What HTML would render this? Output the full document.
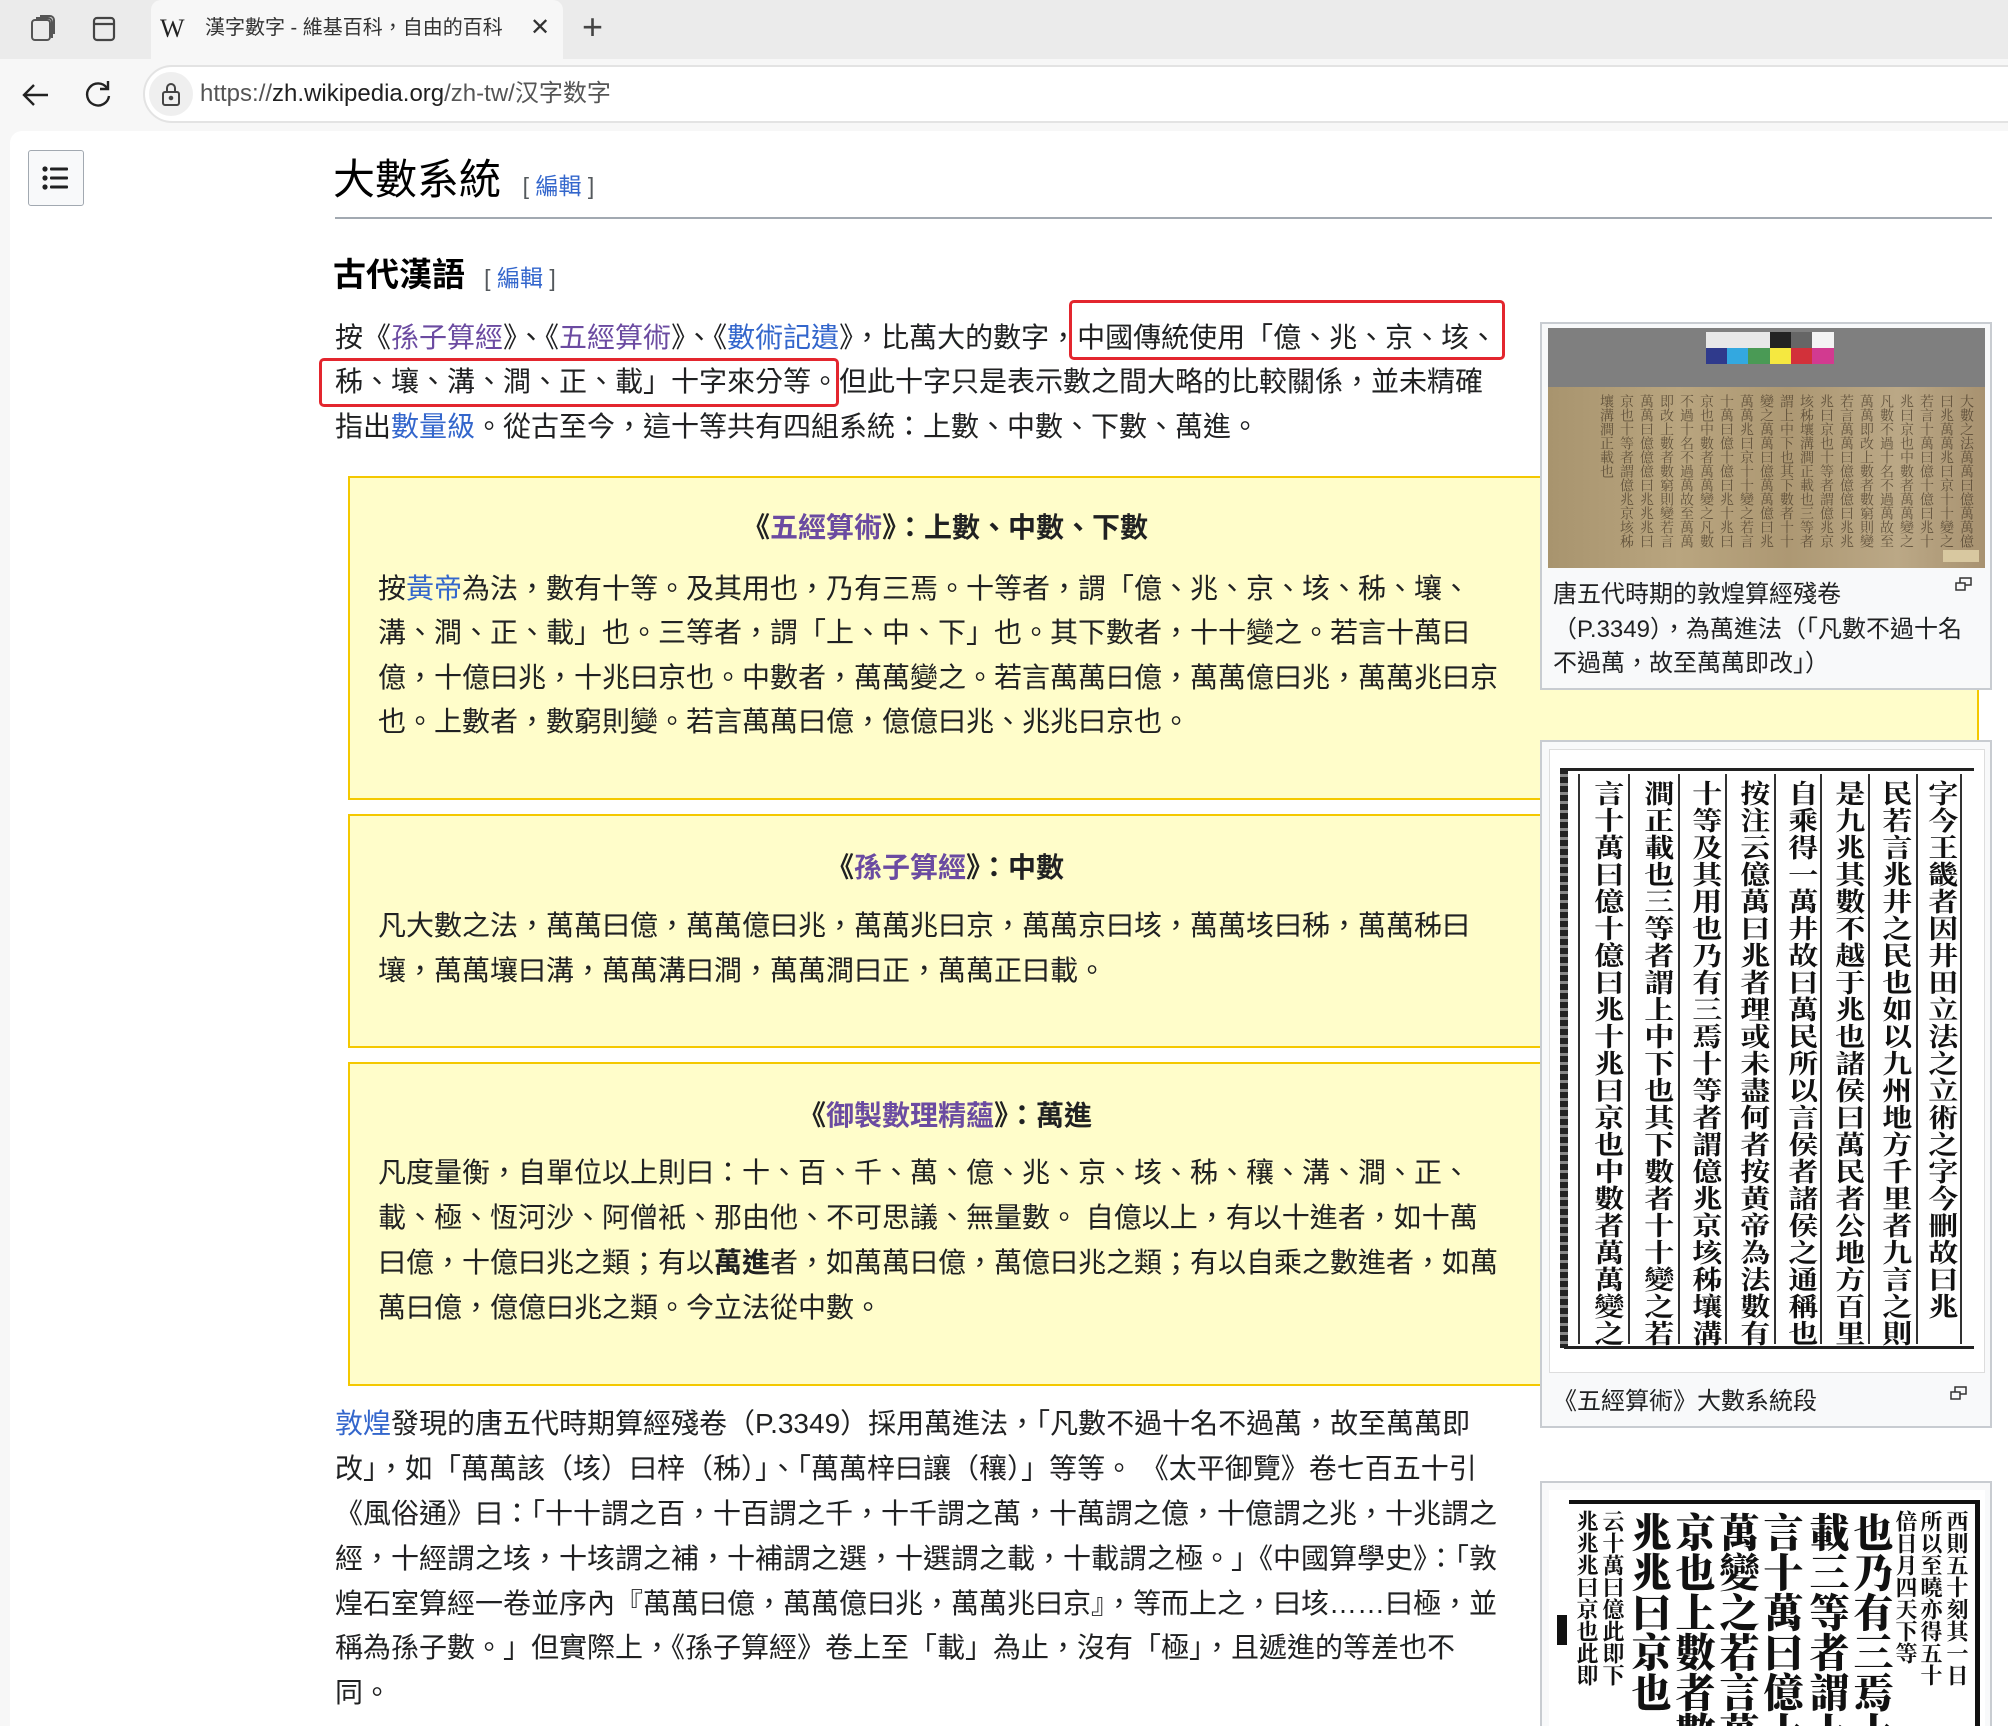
<!DOCTYPE html>
<html><head><meta charset="utf-8">
<style>
*{margin:0;padding:0;box-sizing:border-box}
html,body{width:2008px;height:1726px;overflow:hidden}
body{background:#f7f7f7;font-family:"Liberation Sans","Noto Sans CJK TC",sans-serif;color:#202122;position:relative}
.a{position:absolute;white-space:nowrap}
.t{font-size:28px;line-height:45px;left:335px}
.b{font-size:28px;line-height:45px;left:378px}
.bt{font-size:28px;line-height:45px;font-weight:bold;left:348px;width:1194px;text-align:center}
.blue{color:#3366cc}
.vis{color:#6b4ba1}
.box{position:absolute;left:348px;width:1631px;background:#fffdca;border:2px solid #f4c800}
.fig{position:absolute;left:1540px;width:452px;background:#f8f9fa;border:2px solid #c8ccd1}
.cap{font-size:24px;line-height:34px;color:#202122}
.red{position:absolute;border:3px solid #e3262e;border-radius:5px}
.col{position:absolute;writing-mode:vertical-rl;font-family:"Noto Serif CJK SC","Liberation Serif",serif;font-weight:700;color:#111;white-space:nowrap}
.edit{font-size:23px;color:#54595d}
.edit b{color:#3366cc;font-weight:normal}
</style></head><body>

<!-- tab bar -->
<div class="a" style="left:0;top:0;width:2008px;height:59px;background:#ebebeb"></div>
<div class="a" style="left:151px;top:0;width:412px;height:59px;background:#f7f7f7;border-radius:10px 10px 0 0"></div>
<svg class="a" style="left:26px;top:12px" width="34" height="34" viewBox="0 0 34 34" fill="none" stroke="#555" stroke-width="2"><rect x="6" y="8" width="18" height="20" rx="3"/><path d="M10 6h12a4 4 0 0 1 4 4v16"/><path d="M14 4h10a4 4 0 0 1 4 4v14"/></svg>
<svg class="a" style="left:90px;top:14px" width="30" height="30" viewBox="0 0 30 30" fill="none" stroke="#444" stroke-width="2.2"><rect x="4" y="4" width="20" height="22" rx="3"/><path d="M4 10h20"/></svg>
<div class="a" style="left:160px;top:15px;font-family:'Liberation Serif',serif;font-size:26px;line-height:28px;color:#222">W</div>
<div class="a" style="left:205px;top:14px;font-size:20px;line-height:28px;color:#333;width:310px;overflow:hidden">漢字數字 - 維基百科，自由的百科</div>
<div class="a" style="left:530px;top:13px;font-size:24px;color:#333">✕</div>
<div class="a" style="left:582px;top:6px;font-size:36px;color:#444;font-weight:300">+</div>

<!-- address row -->
<div class="a" style="left:0;top:59px;width:2008px;height:72px;background:#f7f7f7"></div>
<svg class="a" style="left:20px;top:80px" width="32" height="30" viewBox="0 0 32 30" fill="none" stroke="#222" stroke-width="2.4"><path d="M28 15H5M14 5L4 15l10 10"/></svg>
<svg class="a" style="left:82px;top:78px" width="32" height="32" viewBox="0 0 32 32" fill="none" stroke="#222" stroke-width="2.4"><path d="M25 10a11 11 0 1 0 2 8"/><path d="M26 3v8h-8"/></svg>
<div class="a" style="left:143px;top:65px;width:1900px;height:58px;background:#fff;border:2px solid #e3e3e3;border-radius:29px"></div>
<div class="a" style="left:149px;top:72px;width:44px;height:44px;background:#efefef;border-radius:22px"></div>
<svg class="a" style="left:159px;top:80px" width="24" height="28" viewBox="0 0 24 28" fill="none" stroke="#444" stroke-width="2"><rect x="4" y="12" width="16" height="13" rx="2"/><path d="M8 12V8a4 4 0 0 1 8 0v4"/><circle cx="12" cy="18" r="1.3" fill="#444"/></svg>
<div class="a" style="left:200px;top:78px;font-size:24px;line-height:32px;color:#555">https://<span style="color:#1f1f1f">zh.wikipedia.org</span>/zh-tw/汉字数字</div>

<!-- page -->
<div class="a" style="left:10px;top:131px;width:1998px;height:1595px;background:#fff;border-radius:12px 0 0 0"></div>
<div class="a" style="left:28px;top:150px;width:56px;height:56px;background:#f8f9fa;border:1px solid #a2a9b1;border-radius:3px"></div>
<svg class="a" style="left:40px;top:162px" width="32" height="32" viewBox="0 0 32 32" fill="#202122"><circle cx="5" cy="7" r="2.6"/><circle cx="5" cy="16" r="2.6"/><circle cx="5" cy="25" r="2.6"/><rect x="10" y="5.5" width="18" height="3" rx="1"/><rect x="10" y="14.5" width="18" height="3" rx="1"/><rect x="10" y="23.5" width="18" height="3" rx="1"/></svg>

<div class="a" style="left:333px;top:152px;font-size:42px;line-height:56px;color:#000">大數系統 <span class="edit" style="margin-left:10px">[ <b>編輯</b> ]</span></div>
<div class="a" style="left:335px;top:217px;width:1657px;height:2px;background:#a2a9b1"></div>
<div class="a" style="left:333px;top:252px;font-size:33px;line-height:46px;font-weight:bold;color:#000">古代漢語 <span class="edit" style="font-weight:normal;margin-left:10px">[ <b>編輯</b> ]</span></div>

<div class="a t" style="top:315px">按《<span class="vis">孫子算經</span>》、《<span class="vis">五經算術</span>》、《<span class="blue">數術記遺</span>》，比萬大的數字，中國傳統使用「億、兆、京、垓、</div>
<div class="a t" style="top:359px">秭、壤、溝、澗、正、載」十字來分等。但此十字只是表示數之間大略的比較關係，並未精確</div>
<div class="a t" style="top:404px">指出<span class="blue">數量級</span>。從古至今，這十等共有四組系統：上數、中數、下數、萬進。</div>
<div class="red" style="left:1069px;top:300px;width:436px;height:60px"></div>
<div class="red" style="left:319px;top:358px;width:520px;height:49px"></div>

<!-- boxes -->
<div class="box" style="top:476px;height:324px"></div>
<div class="a bt" style="top:505px">《<span class="vis">五經算術</span>》：上數、中數、下數</div>
<div class="a b" style="top:566px">按<span class="blue">黃帝</span>為法，數有十等。及其用也，乃有三焉。十等者，謂「億、兆、京、垓、秭、壤、</div>
<div class="a b" style="top:610px">溝、澗、正、載」也。三等者，謂「上、中、下」也。其下數者，十十變之。若言十萬曰</div>
<div class="a b" style="top:655px">億，十億曰兆，十兆曰京也。中數者，萬萬變之。若言萬萬曰億，萬萬億曰兆，萬萬兆曰京</div>
<div class="a b" style="top:699px">也。上數者，數窮則變。若言萬萬曰億，億億曰兆、兆兆曰京也。</div>

<div class="box" style="top:814px;height:234px"></div>
<div class="a bt" style="top:845px">《<span class="vis">孫子算經</span>》：中數</div>
<div class="a b" style="top:903px">凡大數之法，萬萬曰億，萬萬億曰兆，萬萬兆曰京，萬萬京曰垓，萬萬垓曰秭，萬萬秭曰</div>
<div class="a b" style="top:948px">壤，萬萬壤曰溝，萬萬溝曰澗，萬萬澗曰正，萬萬正曰載。</div>

<div class="box" style="top:1062px;height:324px"></div>
<div class="a bt" style="top:1093px">《<span class="vis">御製數理精蘊</span>》：萬進</div>
<div class="a b" style="top:1150px">凡度量衡，自單位以上則曰：十、百、千、萬、億、兆、京、垓、秭、穰、溝、澗、正、</div>
<div class="a b" style="top:1195px">載、極、恆河沙、阿僧衹、那由他、不可思議、無量數。 自億以上，有以十進者，如十萬</div>
<div class="a b" style="top:1240px">曰億，十億曰兆之類；有以<b>萬進</b>者，如萬萬曰億，萬億曰兆之類；有以自乘之數進者，如萬</div>
<div class="a b" style="top:1285px">萬曰億，億億曰兆之類。今立法從中數。</div>

<div class="a t" style="top:1401px"><span class="blue">敦煌</span>發現的唐五代時期算經殘卷（P.3349）採用萬進法，「凡數不過十名不過萬，故至萬萬即</div>
<div class="a t" style="top:1446px">改」，如「萬萬該（垓）曰梓（秭）」、「萬萬梓曰讓（穰）」等等。 《太平御覽》卷七百五十引</div>
<div class="a t" style="top:1491px">《風俗通》曰：「十十謂之百，十百謂之千，十千謂之萬，十萬謂之億，十億謂之兆，十兆謂之</div>
<div class="a t" style="top:1536px">經，十經謂之垓，十垓謂之補，十補謂之選，十選謂之載，十載謂之極。」《中國算學史》：「敦</div>
<div class="a t" style="top:1581px">煌石室算經一卷並序內『萬萬曰億，萬萬億曰兆，萬萬兆曰京』，等而上之，曰垓……曰極，並</div>
<div class="a t" style="top:1625px">稱為孫子數。」但實際上，《孫子算經》卷上至「載」為止，沒有「極」，且遞進的等差也不</div>
<div class="a t" style="top:1670px">同。</div>

<!-- figure 1 -->
<div class="fig" style="top:322px;height:368px"></div>
<div class="a" style="left:1548px;top:328px;width:437px;height:240px;background:#7f7f7f;overflow:hidden">
  <div class="a" style="left:0;top:59px;width:437px;height:181px;background:linear-gradient(90deg,#a8946e,#b9a57f 30%,#ad9873 55%,#bba886 80%,#a89270);"></div>
  <div class="col" style="right:8px;top:66px;font-size:14px;line-height:20px;color:#3f3222;font-weight:400;height:165px;white-space:normal;opacity:.7">大數之法萬萬曰億萬萬億曰兆萬萬兆曰京十十變之若言十萬曰億十億曰兆十兆曰京也中數者萬萬變之凡數不過十名不過萬故至萬萬即改上數者數窮則變若言萬萬曰億億億曰兆兆兆曰京也十等者謂億兆京垓秭壤溝澗正載也三等者謂上中下也其下數者十十變之萬萬曰億萬萬億曰兆萬萬兆曰京十十變之若言十萬曰億十億曰兆十兆曰京也中數者萬萬變之凡數不過十名不過萬故至萬萬即改上數者數窮則變若言萬萬曰億億億曰兆兆兆曰京也十等者謂億兆京垓秭壤溝澗正載也</div>
  <div class="a" style="left:158px;top:4px;width:64px;height:16px;background:#e8e8e8"></div>
  <div class="a" style="left:222px;top:4px;width:21px;height:16px;background:#222"></div>
  <div class="a" style="left:243px;top:4px;width:21px;height:16px;background:#666"></div>
  <div class="a" style="left:264px;top:4px;width:22px;height:16px;background:#f4f4f4"></div>
  <div class="a" style="left:158px;top:20px;width:21px;height:16px;background:#2f3a8c"></div>
  <div class="a" style="left:179px;top:20px;width:21px;height:16px;background:#33a8e0"></div>
  <div class="a" style="left:200px;top:20px;width:22px;height:16px;background:#4a9a55"></div>
  <div class="a" style="left:222px;top:20px;width:21px;height:16px;background:#f5e840"></div>
  <div class="a" style="left:243px;top:20px;width:21px;height:16px;background:#d2313a"></div>
  <div class="a" style="left:264px;top:20px;width:22px;height:16px;background:#d23a90"></div>
  <div class="a" style="left:395px;top:222px;width:36px;height:12px;background:#d8c8a0"></div>
</div>
<svg class="a" style="left:1955px;top:576px" width="18" height="16" viewBox="0 0 18 16" fill="none" stroke="#333" stroke-width="1.5"><rect x="1" y="7" width="9" height="7"/><path d="M5 7V2h11v7h-6"/></svg>
<div class="a cap" style="left:1553px;top:578px">唐五代時期的敦煌算經殘卷</div>
<div class="a cap" style="left:1553px;top:613px">（P.3349），為萬進法（「凡數不過十名</div>
<div class="a cap" style="left:1553px;top:647px">不過萬，故至萬萬即改」）</div>

<!-- figure 2 -->
<div class="fig" style="top:740px;height:688px"></div>
<div class="a" style="left:1549px;top:749px;width:436px;height:624px;background:#fff;border:1px solid #ddd;overflow:hidden">
  <div class="a" style="left:14px;top:18px;width:410px;height:3px;background:#222"></div>
  <div class="a" style="left:14px;top:596px;width:410px;height:3px;background:#222"></div>
  <div class="a" style="left:10px;top:18px;width:8px;height:580px;background:repeating-linear-gradient(180deg,#222 0 6px,#888 6px 9px)"></div>
  <div class="a" style="left:28px;top:24px;width:2px;height:570px;background:#333"></div>
  <div class="a" style="left:78px;top:24px;width:2px;height:570px;background:#333"></div>
  <div class="a" style="left:128px;top:24px;width:2px;height:570px;background:#333"></div>
  <div class="a" style="left:175px;top:24px;width:2px;height:570px;background:#333"></div>
  <div class="a" style="left:224px;top:24px;width:2px;height:570px;background:#333"></div>
  <div class="a" style="left:270px;top:24px;width:2px;height:570px;background:#333"></div>
  <div class="a" style="left:318px;top:24px;width:2px;height:570px;background:#333"></div>
  <div class="a" style="left:366px;top:24px;width:2px;height:570px;background:#333"></div>
  <div class="a" style="left:410px;top:24px;width:2px;height:570px;background:#333"></div>
  <div class="col" style="left:38px;top:30px;font-size:26px;line-height:36px;letter-spacing:1px;transform:scaleX(1.15);transform-origin:left top">言十萬曰億十億曰兆十兆曰京也中數者萬萬變之</div>
  <div class="col" style="left:88px;top:30px;font-size:26px;line-height:36px;letter-spacing:1px;transform:scaleX(1.15);transform-origin:left top">澗正載也三等者謂上中下也其下數者十十變之若</div>
  <div class="col" style="left:136px;top:30px;font-size:26px;line-height:36px;letter-spacing:1px;transform:scaleX(1.15);transform-origin:left top">十等及其用也乃有三焉十等者謂億兆京垓秭壤溝</div>
  <div class="col" style="left:184px;top:30px;font-size:26px;line-height:36px;letter-spacing:1px;transform:scaleX(1.15);transform-origin:left top">按注云億萬曰兆者理或未盡何者按黄帝為法數有</div>
  <div class="col" style="left:232px;top:30px;font-size:26px;line-height:36px;letter-spacing:1px;transform:scaleX(1.15);transform-origin:left top">自乘得一萬井故曰萬民所以言侯者諸侯之通稱也</div>
  <div class="col" style="left:279px;top:30px;font-size:26px;line-height:36px;letter-spacing:1px;transform:scaleX(1.15);transform-origin:left top">是九兆其數不越于兆也諸侯曰萬民者公地方百里</div>
  <div class="col" style="left:326px;top:30px;font-size:26px;line-height:36px;letter-spacing:1px;transform:scaleX(1.15);transform-origin:left top">民若言兆井之民也如以九州地方千里者九言之則</div>
  <div class="col" style="left:372px;top:30px;font-size:26px;line-height:36px;letter-spacing:1px;transform:scaleX(1.15);transform-origin:left top">字今王畿者因井田立法之立術之字今刪故曰兆</div>
</div>
<svg class="a" style="left:1950px;top:1385px" width="18" height="16" viewBox="0 0 18 16" fill="none" stroke="#333" stroke-width="1.5"><rect x="1" y="7" width="9" height="7"/><path d="M5 7V2h11v7h-6"/></svg>
<div class="a cap" style="left:1553px;top:1385px">《五經算術》大數系統段</div>

<!-- figure 3 -->
<div class="fig" style="top:1481px;height:245px;border-bottom:none"></div>
<div class="a" style="left:1549px;top:1490px;width:436px;height:236px;background:#fff;overflow:hidden">
  <div class="a" style="left:20px;top:10px;width:410px;height:4px;background:#111"></div>
  <div class="a" style="left:426px;top:10px;width:5px;height:240px;background:#111"></div>
  <div class="a" style="left:8px;top:125px;width:10px;height:30px;background:#111"></div>
  <div class="col" style="left:26px;top:20px;font-size:22px;line-height:24px">兆兆兆曰京也此即</div>
  <div class="col" style="left:52px;top:20px;font-size:22px;line-height:24px">云十萬曰億此即下</div>
  <div class="col" style="left:80px;top:22px;font-size:40px;line-height:44px;font-weight:900">兆兆曰京也</div>
  <div class="col" style="left:124px;top:22px;font-size:40px;line-height:44px;font-weight:900">京也上數者數窮</div>
  <div class="col" style="left:168px;top:22px;font-size:40px;line-height:44px;font-weight:900">萬變之若言萬萬</div>
  <div class="col" style="left:212px;top:22px;font-size:40px;line-height:44px;font-weight:900">言十萬曰億十億</div>
  <div class="col" style="left:258px;top:22px;font-size:40px;line-height:44px;font-weight:900">載三等者謂上中下</div>
  <div class="col" style="left:302px;top:22px;font-size:40px;line-height:44px;font-weight:900">也乃有三焉十等者</div>
  <div class="col" style="left:345px;top:20px;font-size:22px;line-height:24px">倍日月四天下等</div>
  <div class="col" style="left:370px;top:20px;font-size:22px;line-height:24px">所以至曉亦得五十</div>
  <div class="col" style="left:396px;top:20px;font-size:22px;line-height:24px">西則五十刻其一日</div>
</div>
</body></html>
